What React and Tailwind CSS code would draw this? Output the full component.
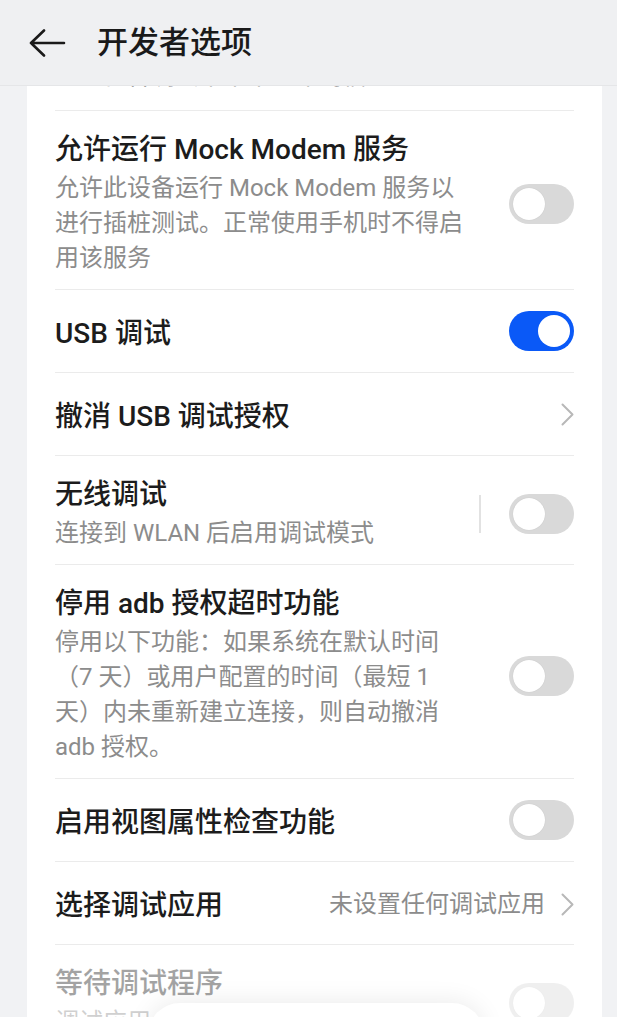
import React from "react";

function Toggle({ on = false }) {
  return on ? (
    <div className="w-[65px] h-[40px] rounded-full bg-[#0a59f7] p-[4px] flex justify-end shrink-0">
      <div className="w-[32px] h-[32px] rounded-full bg-white" />
    </div>
  ) : (
    <div className="w-[65px] h-[40px] rounded-full bg-[#d9d9d9] p-[4px] flex justify-start shrink-0">
      <div className="w-[32px] h-[32px] rounded-full bg-white shadow-[0_0_1px_rgba(0,0,0,0.15)]" />
    </div>
  );
}

function Chevron() {
  return (
    <svg width="13" height="23" viewBox="0 0 13 23" className="shrink-0">
      <path d="M1.5 1.5 L11.5 11.5 L1.5 21.5" fill="none" stroke="#b8b8b8" strokeWidth="2" strokeLinecap="round" strokeLinejoin="round" />
    </svg>
  );
}

function MultiRow({ title, lines, right, disabled = false, border = true }) {
  return (
    <div className={`flex items-center pt-[21px] pb-[13px] ${border ? "border-b border-[#ebebeb]" : ""}`}>
      <div className={`flex-1 min-w-0 ${disabled ? "opacity-40" : ""}`}>
        <div className="text-[28px] leading-[36px] font-medium text-[#1c1c1c] whitespace-nowrap">{title}</div>
        <div className="mt-[3px] text-[24px] leading-[35px] text-[#8c8c8c]">
          {lines.map((l, i) => (
            <div key={i} className="whitespace-nowrap">{l}</div>
          ))}
        </div>
      </div>
      <div className={disabled ? "opacity-40" : ""}>{right}</div>
    </div>
  );
}

function SingleRow({ title, right }) {
  return (
    <div className="h-[83px] flex items-center border-b border-[#ebebeb]">
      <div className="flex-1 mt-[5px] text-[28px] leading-[36px] font-medium text-[#1c1c1c] whitespace-nowrap">{title}</div>
      {right}
    </div>
  );
}

export default function App() {
  return (
    <div className="w-[617px] h-[1017px] overflow-hidden bg-[#f1f2f4] relative flex flex-col font-['Roboto','Noto_Sans_CJK_SC',sans-serif]">
      <header className="h-[86px] shrink-0 bg-[#eff0f2] flex items-center relative z-10 border-b border-[#e5e6e8]">
        <svg width="37" height="28" viewBox="0 0 37 28" className="ml-[29px] shrink-0">
          <path d="M2 14 H35 M15 1.5 L2 14 L15 26.5" fill="none" stroke="#1a1a1a" strokeWidth="2.6" strokeLinecap="round" strokeLinejoin="round" />
        </svg>
        <h1 className="ml-[31px] text-[31px] leading-[40px] font-medium text-[#1a1a1a]">开发者选项</h1>
      </header>

      <main className="ml-[27px] mr-[15px] bg-white pl-[28px] pr-[28px] flex-1 flex flex-col">
        <div className="-mt-[27px] pb-[16px] border-b border-[#ebebeb]">
          <div className="text-[24px] leading-[35px] text-[#8c8c8c] whitespace-nowrap">显示在各调试菜单中的布局信息</div>
        </div>

        <MultiRow
          title="允许运行 Mock Modem 服务"
          lines={["允许此设备运行 Mock Modem 服务以", "进行插桩测试。正常使用手机时不得启", "用该服务"]}
          right={<Toggle />}
        />

        <SingleRow title="USB 调试" right={<Toggle on />} />

        <SingleRow title="撤消 USB 调试授权" right={<Chevron />} />

        <MultiRow
          title="无线调试"
          lines={["连接到 WLAN 后启用调试模式"]}
          right={
            <div className="flex items-center gap-[28px]">
              <div className="w-[2px] h-[38px] bg-[#e2e2e2]" />
              <Toggle />
            </div>
          }
        />

        <MultiRow
          title="停用 adb 授权超时功能"
          lines={["停用以下功能：如果系统在默认时间", "（7 天）或用户配置的时间（最短 1", "天）内未重新建立连接，则自动撤消", "adb 授权。"]}
          right={<Toggle />}
        />

        <SingleRow title="启用视图属性检查功能" right={<Toggle />} />

        <SingleRow
          title="选择调试应用"
          right={
            <div className="flex items-center gap-[16px] mt-[3px]">
              <span className="text-[24px] leading-[35px] text-[#8c8c8c] whitespace-nowrap">未设置任何调试应用</span>
              <Chevron />
            </div>
          }
        />

        <MultiRow
          title="等待调试程序"
          lines={["调试应用会在执行前等待附加调试器"]}
          right={<Toggle />}
          disabled
          border={false}
        />
      </main>

      <div className="absolute left-[148px] top-[1003px] w-[336px] h-[64px] rounded-[32px] bg-white shadow-[0_-2px_24px_rgba(0,0,0,0.08)]" />
    </div>
  );
}
